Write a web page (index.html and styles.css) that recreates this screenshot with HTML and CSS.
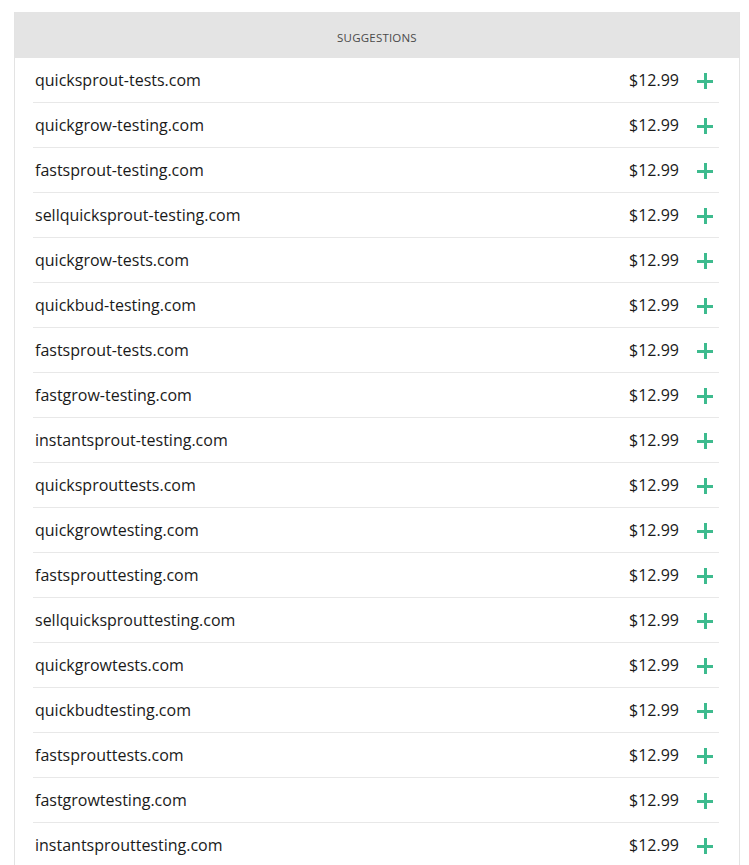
FILE: index.html
```html
<!DOCTYPE html>
<html>
<head>
<meta charset="utf-8">
<link rel="stylesheet" href="styles.css">
</head>
<body>
<div class="panel">
  <div class="panel-head">SUGGESTIONS</div>
  <ul class="list">
    <li class="row"><span class="domain">quicksprout-tests.com</span><span class="price">$12.99</span><span class="add"></span></li>
    <li class="row"><span class="domain">quickgrow-testing.com</span><span class="price">$12.99</span><span class="add"></span></li>
    <li class="row"><span class="domain">fastsprout-testing.com</span><span class="price">$12.99</span><span class="add"></span></li>
    <li class="row"><span class="domain">sellquicksprout-testing.com</span><span class="price">$12.99</span><span class="add"></span></li>
    <li class="row"><span class="domain">quickgrow-tests.com</span><span class="price">$12.99</span><span class="add"></span></li>
    <li class="row"><span class="domain">quickbud-testing.com</span><span class="price">$12.99</span><span class="add"></span></li>
    <li class="row"><span class="domain">fastsprout-tests.com</span><span class="price">$12.99</span><span class="add"></span></li>
    <li class="row"><span class="domain">fastgrow-testing.com</span><span class="price">$12.99</span><span class="add"></span></li>
    <li class="row"><span class="domain">instantsprout-testing.com</span><span class="price">$12.99</span><span class="add"></span></li>
    <li class="row"><span class="domain">quicksprouttests.com</span><span class="price">$12.99</span><span class="add"></span></li>
    <li class="row"><span class="domain">quickgrowtesting.com</span><span class="price">$12.99</span><span class="add"></span></li>
    <li class="row"><span class="domain">fastsprouttesting.com</span><span class="price">$12.99</span><span class="add"></span></li>
    <li class="row"><span class="domain">sellquicksprouttesting.com</span><span class="price">$12.99</span><span class="add"></span></li>
    <li class="row"><span class="domain">quickgrowtests.com</span><span class="price">$12.99</span><span class="add"></span></li>
    <li class="row"><span class="domain">quickbudtesting.com</span><span class="price">$12.99</span><span class="add"></span></li>
    <li class="row"><span class="domain">fastsprouttests.com</span><span class="price">$12.99</span><span class="add"></span></li>
    <li class="row"><span class="domain">fastgrowtesting.com</span><span class="price">$12.99</span><span class="add"></span></li>
    <li class="row"><span class="domain">instantsprouttesting.com</span><span class="price">$12.99</span><span class="add"></span></li>
  </ul>
</div>
</body>
</html>
```
FILE: styles.css
```css
html, body {
  margin: 0;
  padding: 0;
  background: #fff;
}
body {
  font-family: "Open Sans", "Liberation Sans", sans-serif;
  color: #1a1a1a;
  padding: 12px 9px 0 14px;
}
.panel {
  width: 726px;
  border-left: 1px solid #e3e3e3;
  border-right: 1px solid #e3e3e3;
  box-sizing: border-box;
}
.panel-head {
  height: 46px;
  box-sizing: border-box;
  padding-top: 4px;
  background: #e4e4e4;
  display: flex;
  align-items: center;
  justify-content: center;
  font-size: 11.5px;
  color: #4a4a4a;
  letter-spacing: 0.2px;
}
.list {
  list-style: none;
  margin: 0;
  padding: 0 20px 0 18px;
}
.row {
  height: 44px;
  border-bottom: 1px solid #e8e8e8;
  display: flex;
  align-items: center;
  padding: 0 6px 0 2px;
  font-size: 16px;
}
.domain {
  flex: 1;
}
.price {
  margin-right: 18px;
}
.add {
  width: 16px;
  height: 16px;
  margin-top: 2px;
  position: relative;
}
.add::before, .add::after {
  content: "";
  position: absolute;
  background: #3dbb8e;
}
.add::before {
  left: 0;
  top: 6.5px;
  width: 16px;
  height: 3px;
}
.add::after {
  top: 0;
  left: 6.5px;
  width: 3px;
  height: 16px;
}
```
